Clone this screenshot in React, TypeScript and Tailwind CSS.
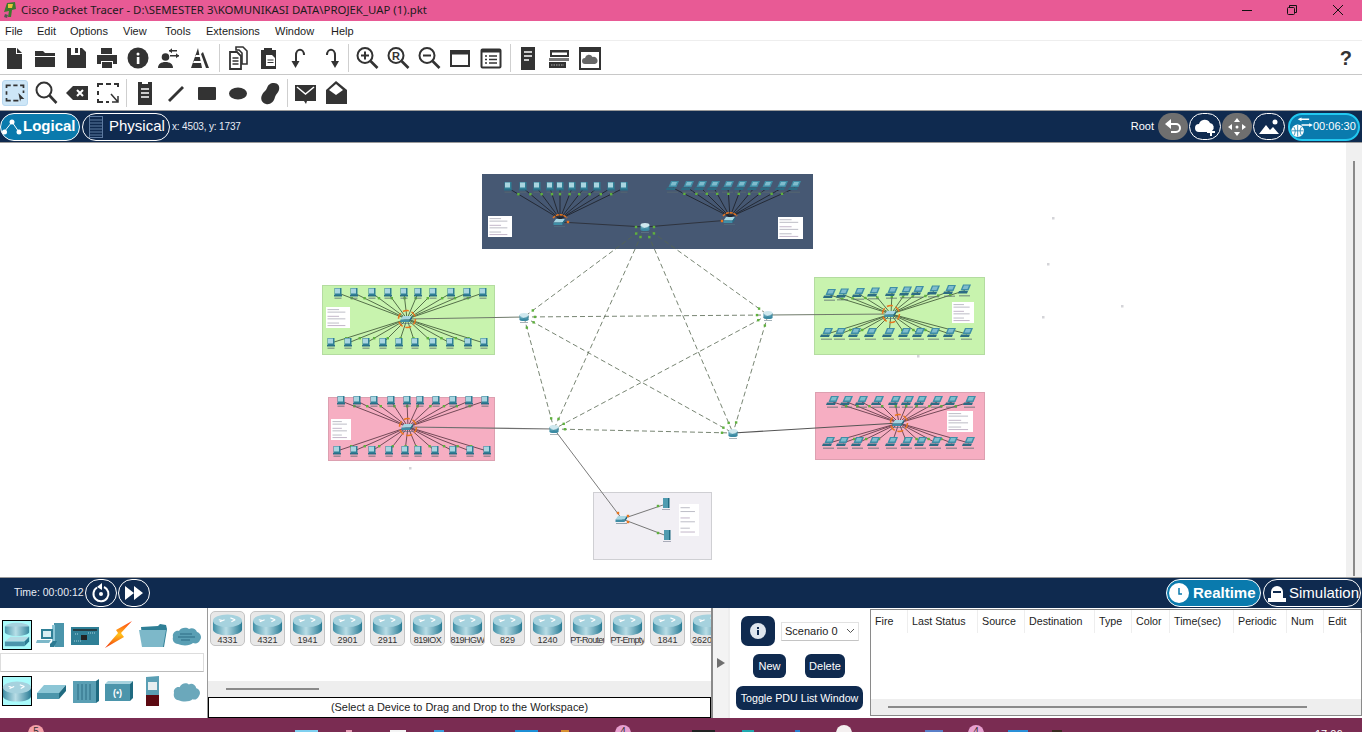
import React from "react";

const ICON = "#333333";

type Pt = [number, number];

const Gradients = () => (
  <svg className="absolute h-0 w-0">
    <defs>
      <linearGradient id="teal" x1="0" x2="1" y1="0" y2="0">
        <stop offset="0" stopColor="#3f8fa6" />
        <stop offset="0.45" stopColor="#b9dde6" />
        <stop offset="1" stopColor="#2b7d96" />
      </linearGradient>
      <linearGradient id="bolt" x1="0" x2="0" y1="0" y2="1">
        <stop offset="0" stopColor="#ff3a12" />
        <stop offset="0.5" stopColor="#ffc21a" />
        <stop offset="1" stopColor="#f2330c" />
      </linearGradient>
    </defs>
  </svg>
);

// ---- toolbar icons ----
const T = ({ children }: { children: React.ReactNode }) => (
  <svg width="28" height="28" viewBox="0 0 28 28" fill={ICON} stroke="none" className="block">
    {children}
  </svg>
);

const Mag = ({ children }: { children?: React.ReactNode }) => (
  <T>
    <circle cx="12" cy="11.5" r="7.5" fill="none" stroke={ICON} strokeWidth="2" />
    <path d="M17.5 17l7 7" stroke={ICON} strokeWidth="2.6" />
    {children}
  </T>
);

const topIcons: Record<string, React.ReactNode> = {
  newFile: <T><path d="M7 4h9v6h6v15H7z" /><path d="M17 4l5 5h-5z" /></T>,
  open: <T><path d="M4 7h8l2 2h10v3H4z" /><path d="M4 13h20v10H4z" /></T>,
  save: <T><path d="M5 4h4v7h9V4h2l4 4v16H5z" /><path d="M13 4h3v5h-3z" /></T>,
  print: <T><path d="M8 4h11v6H8z" /><path d="M4 11h20v9h-4v-3H8v3H4z" /><path d="M9 18h10v6H9z" /></T>,
  info: <T><circle cx="14" cy="14" r="10.5" /><rect x="12.8" y="13" width="2.6" height="7" fill="#fff" /><circle cx="14" cy="10" r="1.5" fill="#fff" /></T>,
  user: <T><circle cx="10.5" cy="13" r="3.8" /><path d="M3 24c0-4 3-6 7.500-6s7.500 2 7.500 6z" /><path d="M14 6h8v1.500h-8zM15 11h9v1.500h-9z" /><path d="M14 6.700l3-2.500v5zM24 11.700l-3-2.500v5z" /></T>,
  cone: <T><path d="M12 4l-7 20h11z" /><path d="M15 10l5 14h3l-6-16z" /><path d="M10 11l4 0v2l-5 0zM8 17l7 0v2l-8 0z" fill="#fff" /></T>,
  copy: <T><path d="M12 3h7l4 4v13h-5V9l-3-3h-3z" fill="none" stroke={ICON} strokeWidth="1.600" /><path d="M6 8h7l4 4v13H6z" fill="#fff" stroke={ICON} strokeWidth="1.800" /><path d="M8.500 14h6M8.500 17h6M8.500 20h6" stroke={ICON} strokeWidth="1.500" /></T>,
  paste: <T><path d="M6 6h3V4h8v2h4v19H6z" /><path d="M11 11h6l3 3v8h-9z" fill="#fff" /><path d="M12.500 16h6M12.500 18.500h6" stroke={ICON} strokeWidth="1.200" /></T>,
  undo: <T><path d="M17 11c0-7-8-7-8 0v8" fill="none" stroke={ICON} strokeWidth="2" transform="translate(1 0)" /><path d="M5.500 17h8l-4 7z" /></T>,
  redo: <T><path d="M10 11c0-7 8-7 8 0v8" fill="none" stroke={ICON} strokeWidth="2" /><path d="M14 17h8l-4 7z" /></T>,
  zoomIn: <Mag><path d="M8 11.500h8M12 7.500v8" stroke={ICON} strokeWidth="2" /></Mag>,
  zoomReset: <Mag><text x="12" y="15.500" fontSize="11" fontWeight="700" textAnchor="middle" fontFamily="Liberation Sans" fill={ICON}>R</text></Mag>,
  zoomOut: <Mag><path d="M8 11.500h8" stroke={ICON} strokeWidth="2" /></Mag>,
  win: <T><rect x="5" y="7" width="18" height="15" fill="none" stroke={ICON} strokeWidth="2" /><rect x="5" y="7" width="18" height="3.500" /></T>,
  list: <T><rect x="4.500" y="5.500" width="19" height="18" rx="1" fill="none" stroke={ICON} strokeWidth="2" /><rect x="5" y="5.500" width="18" height="3" /><path d="M8 12h2M12 12h8M8 15.500h2M12 15.500h8M8 19h2M12 19h8" stroke={ICON} strokeWidth="1.500" /></T>,
  server: <T><path d="M7 3h14v23H7z" /><path d="M10 8h8M10 12h8M10 16h5" stroke="#fff" strokeWidth="1.400" /></T>,
  rack: <T><path d="M5 6h19v7H5z" /><path d="M7 8.500h15v2.500H7z" fill="#fff" /><path d="M4 14h20v3H4z" fill="#777" /><path d="M4 18h17v6H4z" /><path d="M6 21h13" stroke="#888" strokeWidth="1.500" strokeDasharray="1.500 1" /></T>,
  cloudBox: <T><rect x="4" y="4" width="20" height="21" fill="none" stroke={ICON} strokeWidth="2" /><rect x="4" y="4" width="20" height="4" /><path d="M9 20a3 3 0 010-6 4 4 0 017.500-1 3.500 3.500 0 012.500 7z" fill="#666" /></T>,
};

const bottomIcons: Record<string, React.ReactNode> = {
  select: <T><path d="M4 8V5h5M12 5h5M20 5h4v3M4 12v4M24 11v3M4 20v3h5M12 23h6" fill="none" stroke={ICON} strokeWidth="2" /><path d="M19 17l7 7h-4l-1 3z" fill={ICON} transform="translate(-1 -3)" /></T>,
  magnifier: <T><circle cx="12" cy="11" r="7.500" fill="none" stroke={ICON} strokeWidth="2" /><path d="M17.500 16.500l7 7.500" stroke={ICON} strokeWidth="2.600" /></T>,
  del: <T><path d="M10 7h15v14H10l-7-7z" /><path d="M14 11l6 6M20 11l-6 6" stroke="#fff" strokeWidth="2" /></T>,
  resize: <T><path d="M4 8V5h5M12 5h5M20 5h4v3M4 12v4M4 20v3h5M12 23h3" fill="none" stroke={ICON} strokeWidth="2" /><path d="M17 15l7 8M24 17v6h-6" fill="none" stroke={ICON} strokeWidth="1.500" /></T>,
  note: <T><path d="M7 3h14v23H7z" /><path d="M11 3h6v2h-6z" fill="#fff" /><path d="M10 10h8M10 14h8M10 18h8" stroke="#fff" strokeWidth="1.400" /></T>,
  line: <T><path d="M7 22L21 8" stroke={ICON} strokeWidth="2.800" /></T>,
  rect: <T><rect x="5" y="8" width="18" height="13" rx="1" /></T>,
  ellipse: <T><ellipse cx="14" cy="14.500" rx="9" ry="6" /></T>,
  free: <T><path d="M19 4c4 0 6 3 5 7-1 3-3 4-4 7-1 5-5 8-9 7-4-1-6-5-4-9 1-3 4-4 5-7 1-3 3-5 7-5z" /></T>,
  mail: <T><path d="M4 6h21v16H16l-1 3-2-3H4z" /><path d="M6 8l8.500 7L23 8" fill="none" stroke="#fff" strokeWidth="1.500" /></T>,
  mailOpen: <T><path d="M14 2l11 9v14H4V11z" /><path d="M14 5l7 6-7 5-7-5z" fill="#fff" /></T>,
};

const Tool = ({ children }: { children: React.ReactNode }) => (
  <div className="mr-[3px] h-[28px] w-[28px] shrink-0">{children}</div>
);

const Sep = ({ className }: { className: string }) => (
  <div className={`h-[28px] w-px shrink-0 bg-[#cfcfcf] ${className}`} />
);

// ---- network diagram ----
const Pc = ({ x, y }: { x: number; y: number }) => (
  <g>
    <rect x={x - 3.500} y={y - 5} width="7" height="7" fill="#2f7f96" />
    <rect x={x - 3} y={y - 4.500} width="5" height="5" fill="#a9d5e0" />
    <path d={`M${x - 4} ${y + 2}h8v1.500h-8z`} fill="#2a6f87" />
    <rect x={x - 3.500} y={y + 4.500} width="7" height="1.500" fill="#5a6a70" opacity="0.55" />
  </g>
);

const Laptop = ({ x, y }: { x: number; y: number }) => (
  <g>
    <path d={`M${x - 2} ${y - 6}h8l-2.500 6h-8z`} fill="#3f8ea6" />
    <path d={`M${x - 1} ${y - 5}h5l-1.500 3.500h-5z`} fill="#7fbccd" />
    <path d={`M${x - 6} ${y + 0.500}h9l-1 2.500h-9z`} fill="#2c6c84" />
    <rect x={x - 6} y={y + 4.500} width="11" height="1.500" fill="#5a6a70" opacity="0.55" />
  </g>
);

const SwitchNode = ({ x, y }: { x: number; y: number }) => (
  <g>
    <path d={`M${x - 4} ${y - 3}h9l-2.500 3.500h-9z`} fill="#a8d6e2" />
    <path d={`M${x - 6.500} ${y + 0.500}h9v2.500h-9z`} fill="#3f8ea6" />
    <path d={`M${x + 2.500} ${y + 0.500}l2.500-3.500v2.500l-2.500 3.500z`} fill="#236c84" />
    <rect x={x - 6} y={y + 4} width="11" height="1" fill="#55707e" opacity="0.6" />
  </g>
);

const RouterNode = ({ x, y }: { x: number; y: number }) => (
  <g>
    <rect x={x - 4.500} y={y - 2} width="9" height="4.500" fill="url(#teal)" />
    <ellipse cx={x} cy={y + 2.500} rx="4.500" ry="1.500" fill="#3c8ba3" />
    <ellipse cx={x} cy={y - 2} rx="4.500" ry="2" fill="#cfe8ee" />
    <rect x={x - 4} y={y + 5} width="8" height="1" fill="#6b7f88" opacity="0.6" />
  </g>
);

const Dot = ({ x, y, c = "#5fb13e" }: { x: number; y: number; c?: string }) => (
  <rect x={x - 1.200} y={y - 1.200} width="2.400" height="2.400" fill={c} />
);

// link with a green light close to the end device
const Link = ({ a, b, color, w = 0.8 }: { a: Pt; b: Pt; color: string; w?: number }) => (
  <g>
    <line x1={a[0]} y1={a[1]} x2={b[0]} y2={b[1]} stroke={color} strokeWidth={w} />
    <Dot x={a[0] + (b[0] - a[0]) * 0.2} y={a[1] + (b[1] - a[1]) * 0.2} />
  </g>
);

const Note = ({ x, y, w, h }: { x: number; y: number; w: number; h: number }) => (
  <g>
    <rect x={x} y={y} width={w} height={h} fill="#fff" />
    {[0.1, 0.22, 0.42, 0.54, 0.74, 0.86].map((f, i) => (
      <rect
        key={i}
        x={x + 1.500}
        y={y + h * f}
        width={(w - 3) * (i % 2 ? 0.85 : 0.55)}
        height="1"
        fill={i % 3 === 2 ? "#8a6f96" : "#7d7d90"}
        opacity="0.5"
      />
    ))}
  </g>
);

const Arcs = ({ x, y }: { x: number; y: number }) => (
  <circle
    cx={x}
    cy={y}
    r="8.500"
    fill="none"
    stroke="#e8761f"
    strokeWidth="1.500"
    strokeDasharray="6 2.900"
  />
);

const R_A: Pt = [645, 227];
const R_B: Pt = [524, 317];
const R_C: Pt = [768, 315];
const R_D: Pt = [554, 429];
const R_E: Pt = [733, 433];
const mesh: [Pt, Pt][] = [
  [R_A, R_B],
  [R_A, R_C],
  [R_A, R_D],
  [R_A, R_E],
  [R_B, R_C],
  [R_B, R_D],
  [R_B, R_E],
  [R_C, R_D],
  [R_C, R_E],
  [R_D, R_E],
];

const lans = [
  {
    sw: [407, 319] as Pt,
    kind: "pc",
    line: "#55704a",
    top: [338, 354, 372, 388, 404, 418, 433, 451, 467, 483].map((x): Pt => [x, 293]),
    bottom: [331, 348, 366, 383, 399, 415, 433, 450, 468, 484].map((x): Pt => [x, 343]),
  },
  {
    sw: [891, 314] as Pt,
    kind: "laptop",
    line: "#55704a",
    top: [830, 843, 859, 874, 892, 906, 918, 934, 950, 965].map((x, i): Pt => [x, 295 - i * 0.5]),
    bottom: [827, 840, 855, 871, 889, 905, 919, 934, 950, 967].map((x): Pt => [x, 334]),
  },
  {
    sw: [408, 427] as Pt,
    kind: "pc",
    line: "#744a58",
    top: [341, 357, 374, 391, 407, 420, 436, 453, 469, 485].map((x): Pt => [x, 401]),
    bottom: [337, 354, 372, 389, 405, 418, 435, 453, 470, 487].map((x): Pt => [x, 451]),
  },
  {
    sw: [899, 423] as Pt,
    kind: "laptop",
    line: "#744a58",
    top: [833, 847, 862, 878, 895, 908, 921, 937, 952, 970].map((x): Pt => [x, 402]),
    bottom: [829, 843, 858, 874, 892, 907, 921, 936, 952, 969].map((x): Pt => [x, 443]),
  },
];

const bluePcs = [508, 523, 537, 550, 560, 572, 584, 597, 611, 624];
const blueLaptops = [673, 688, 701, 714, 728, 741, 754, 767, 782, 795];
const specks: Pt[] = [[1053, 218], [1048, 264], [1043, 317], [1122, 306], [918, 356], [410, 468]];

const towards = (a: Pt, b: Pt, d: number): Pt => {
  const len = Math.hypot(b[0] - a[0], b[1] - a[1]);
  return [a[0] + ((b[0] - a[0]) * d) / len, a[1] + ((b[1] - a[1]) * d) / len];
};

const Diagram = () => (
  <svg width="1346" height="434" viewBox="0 143 1346 434" className="block">
    <rect x="482" y="174" width="331" height="75" fill="#465873" />
    <rect x="322.500" y="285.500" width="172" height="69" fill="#c8f3ae" stroke="#b4dca0" />
    <rect x="814.500" y="277.500" width="170" height="77" fill="#c8f3ae" stroke="#b4dca0" />
    <rect x="328.500" y="397.500" width="166" height="63" fill="#f6aec2" stroke="#dca0b0" />
    <rect x="815.500" y="392.500" width="169" height="67" fill="#f6aec2" stroke="#dca0b0" />
    <rect x="593.500" y="492.500" width="118" height="67" fill="#f1eff4" stroke="#cfcfd3" />

    {specks.map(([x, y]) => (
      <rect key={x} x={x - 1} y={y - 1} width="2.500" height="2.500" fill="#d4d4d8" />
    ))}

    {mesh.map(([a, b], i) => {
      const p = towards(a, b, 11);
      const q = towards(b, a, 11);
      return (
        <g key={i}>
          <line x1={a[0]} y1={a[1]} x2={b[0]} y2={b[1]} stroke="#56664f" strokeWidth="0.800" strokeDasharray="5 3" />
          <Dot x={p[0]} y={p[1]} />
          <Dot x={q[0]} y={q[1]} />
        </g>
      );
    })}

    {/* top block */}
    <line x1="560" y1="222" x2="645" y2="227" stroke="#2b2f38" strokeWidth="0.900" />
    <line x1="730" y1="220" x2="645" y2="227" stroke="#2b2f38" strokeWidth="0.900" />
    <Dot x={568} y={222} c="#e8761f" />
    <Dot x={722} y={221} c="#e8761f" />
    <Dot x={636} y={227} />
    <Dot x={654} y={227} />
    {bluePcs.map((x) => (
      <Link key={x} a={[x, 188]} b={[560, 219]} color="#20252e" w={0.9} />
    ))}
    {blueLaptops.map((x) => (
      <Link key={x} a={[x, 188]} b={[730, 217]} color="#20252e" w={0.9} />
    ))}
    <path d="M553 218a9 9 0 0114 0" fill="none" stroke="#e8761f" strokeWidth="1.500" strokeDasharray="3 0.800" />
    <path d="M723 216a9 9 0 0114 0" fill="none" stroke="#e8761f" strokeWidth="1.500" strokeDasharray="3 0.800" />
    {bluePcs.map((x) => <Pc key={x} x={x} y={187} />)}
    {blueLaptops.map((x) => <Laptop key={x} x={x} y={187} />)}
    <SwitchNode x={560} y={222} />
    <SwitchNode x={730} y={220} />
    <Note x={488} y={216} w={24} h={21} />
    <Note x={778} y={217} w={25} h={22} />

    {/* lan to router trunks */}
    <line x1="407" y1="319" x2="524" y2="317" stroke="#6f7a6a" strokeWidth="1.200" />
    <line x1="891" y1="314" x2="768" y2="315" stroke="#6f7a6a" strokeWidth="1.200" />
    <line x1="408" y1="427" x2="554" y2="429" stroke="#6f6f6f" strokeWidth="1.200" />
    <line x1="899" y1="423" x2="733" y2="433" stroke="#555" strokeWidth="1.200" />
    <line x1="554" y1="429" x2="622" y2="519" stroke="#7a7a7a" strokeWidth="1" />

    {lans.map((lan, i) => (
      <g key={i}>
        {[...lan.top, ...lan.bottom].map((p, j) => (
          <Link key={j} a={p} b={lan.sw} color={lan.line} w={1} />
        ))}
        {[...lan.top, ...lan.bottom].map((p, j) =>
          lan.kind === "pc" ? <Pc key={j} x={p[0]} y={p[1]} /> : <Laptop key={j} x={p[0]} y={p[1]} />
        )}
        <Arcs x={lan.sw[0]} y={lan.sw[1]} />
        <SwitchNode x={lan.sw[0]} y={lan.sw[1]} />
      </g>
    ))}
    <Note x={326} y={307} w={24} h={21} />
    <Note x={952} y={302} w={22} h={21} />
    <Note x={331} y={419} w={20} h={21} />
    <Note x={947} y={411} w={26} h={21} />

    {/* server block */}
    <line x1="622" y1="519" x2="666" y2="504" stroke="#777" strokeWidth="1" />
    <line x1="622" y1="519" x2="667" y2="536" stroke="#777" strokeWidth="1" />
    <Dot x={628} y={516} c="#e8761f" />
    <Dot x={628} y={522} c="#e8761f" />
    <Dot x={658} y={506} />
    <Dot x={658} y={533} />
    <Dot x={618} y={513} c="#e8761f" />
    <SwitchNode x={622} y={519} />
    {([[666, 504], [667, 536]] as Pt[]).map(([x, y]) => (
      <g key={y}>
        <rect x={x - 3} y={y - 6} width="5" height="10" fill="#4f9bb0" />
        <rect x={x + 2} y={y - 6} width="1.500" height="10" fill="#1f6a80" />
        <rect x={x - 4} y={y + 5} width="8" height="1" fill="#7a7d90" opacity="0.6" />
      </g>
    ))}
    <Note x={679} y={504} w={20} h={32} />

    <RouterNode x={R_A[0]} y={R_A[1]} />
    <RouterNode x={R_B[0]} y={R_B[1]} />
    <RouterNode x={R_C[0]} y={R_C[1]} />
    <RouterNode x={R_D[0]} y={R_D[1]} />
    <RouterNode x={R_E[0]} y={R_E[1]} />
  </svg>
);

// ---- bottom device icons ----
const RouterBig = ({ size = 30 }: { size?: number }) => (
  <svg width={size} height={size * 0.75} viewBox="0 0 32 24" className="block shrink-0">
    <path d="M1 8v9c0 3.500 6.500 6 15 6s15-2.500 15-6V8z" fill="url(#teal)" />
    <ellipse cx="16" cy="8" rx="15" ry="6.500" fill="#a6d2de" />
    <path d="M8 9l5-2M7 7l3 .5M19 5l5 2M20 9l4-2" stroke="#fff" strokeWidth="1.200" fill="none" />
  </svg>
);

const categories: React.ReactNode[] = [
  <svg key="a" width="30" height="28" viewBox="0 0 30 28" className="block">
    <ellipse cx="15" cy="5" rx="13" ry="4" fill="#a6d2de" />
    <path d="M2 5v6c0 2 6 4 13 4s13-2 13-4V5z" fill="url(#teal)" opacity="0.9" />
    <path d="M8 16h20l-5 5H2z" fill="#b5dbe4" />
    <path d="M2 21h21v5H2z" fill="#4b95ab" />
    <path d="M23 21l5-5v5l-5 5z" fill="#2c7a92" />
  </svg>,
  <svg key="b" width="30" height="28" viewBox="0 0 30 28" className="block">
    <path d="M18 2h10v24H18z" fill="#4b95ab" />
    <path d="M16 4h3v22h-3z" fill="#8cc6d6" />
    <path d="M5 8h12v10H5z" fill="#2f7f96" />
    <path d="M7 10h8v6H7z" fill="#d8eef3" />
    <path d="M1 19h14l-2 3H0z" fill="#7db8c9" />
    <path d="M14 23l3-3h4l-3 6h-4z" fill="#2c7a92" />
  </svg>,
  <svg key="c" width="30" height="28" viewBox="0 0 30 28" className="block">
    <rect x="1" y="6" width="28" height="18" fill="#2f7f96" />
    <path d="M3 8h24v2H3z" fill="#222" opacity="0.7" />
    <rect x="11" y="14" width="6" height="5" fill="#222" />
    <path d="M4 20h8M18 12h8M5 13h4" stroke="#a6d2de" strokeWidth="1" strokeDasharray="1 1" />
  </svg>,
  <svg key="d" width="30" height="28" viewBox="0 0 30 28" className="block">
    <path d="M28 0L12 9l2 3-13 15 19-11-3-4z" fill="url(#bolt)" />
  </svg>,
  <svg key="e" width="30" height="28" viewBox="0 0 30 28" className="block">
    <path d="M3 6l17-1 2-2 6 1 1 4-3 18H5z" fill="#2f7f96" />
    <path d="M1 9h27l-3 17H4z" fill="#7db8c9" />
  </svg>,
  <svg key="f" width="30" height="28" viewBox="0 0 30 28" className="block">
    <path d="M6 23c-4 0-6-4-5-7-1-4 3-7 6-6 2-4 8-4 10-2 3-2 7 0 8 3 4 1 5 6 3 8-1 3-4 4-7 3-3 3-11 3-15 1z" fill="#5a9fb4" />
    <path d="M8 13h12M6 16h17M9 19h9" stroke="#2c6c84" strokeWidth="1.200" />
  </svg>,
];

const subCategories: React.ReactNode[] = [
  <RouterBig key="a" />,
  <svg key="b" width="30" height="24" viewBox="0 0 30 24" className="block">
    <path d="M8 6h22l-7 8H1z" fill="#8cc6d6" />
    <path d="M1 14h22v6H1z" fill="#4b95ab" />
    <path d="M23 14l7-8v6l-7 8z" fill="#1f6a80" />
  </svg>,
  <svg key="c" width="30" height="30" viewBox="0 0 30 30" className="block">
    <path d="M3 5h23v22H3z" fill="#5a9fb4" />
    <path d="M26 5l3-2v22l-3 2z" fill="#1f6a80" />
    <path d="M8 8v16M12 8v16M16 8v16M20 8v16" stroke="#2c6c84" strokeWidth="1" />
  </svg>,
  <svg key="d" width="30" height="26" viewBox="0 0 30 26" className="block">
    <path d="M1 6h25v17H1z" fill="#4b95ab" />
    <path d="M1 6l3-3h25l-3 3z" fill="#a6d2de" />
    <path d="M26 6l3-3v17l-3 3z" fill="#1f6a80" />
    <text x="13.500" y="18" fontSize="9" fill="#fff" textAnchor="middle" fontFamily="Liberation Sans" fontWeight="700">(•)</text>
  </svg>,
  <svg key="e" width="16" height="32" viewBox="0 0 16 32" className="block">
    <path d="M1 2l13-1v30H1z" fill="#5a9fb4" />
    <path d="M1 20h13v11H1z" fill="#5c0a12" />
    <rect x="3" y="7" width="9" height="8" fill="#e6eef0" />
  </svg>,
  <svg key="f" width="30" height="26" viewBox="0 0 30 28" className="block">
    <path d="M6 24c-4 0-6-4-5-8-1-4 3-7 6-6 2-5 8-5 10-3 3-2 7 0 8 4 4 1 5 6 3 8-1 3-4 5-7 4-3 3-11 3-15 1z" fill="#6ba8bb" />
  </svg>,
];

const devices = ["4331", "4321", "1941", "2901", "2911", "819IOX", "819HGW", "829", "1240", "PT-Router", "PT-Empty", "1841", "2620"];

const pduCols: [string, number][] = [
  ["Fire", 37],
  ["Last Status", 70],
  ["Source", 47],
  ["Destination", 70],
  ["Type", 37],
  ["Color", 38],
  ["Time(sec)", 64],
  ["Periodic", 53],
  ["Num", 37],
  ["Edit", 37],
];

const taskBits: [number, number, string][] = [
  [295, 23, "bg-[#7fd0f0]"],
  [346, 6, "bg-[#e8a0b8]"],
  [390, 16, "bg-[#f4f4f4]"],
  [434, 10, "bg-[#3aa0e0]"],
  [515, 23, "bg-[#1c8fd6]"],
  [561, 8, "bg-[#d89030]"],
  [692, 23, "bg-[#222222]"],
  [742, 12, "bg-[#20a8b0]"],
  [795, 5, "bg-[#2a80d0]"],
  [925, 18, "bg-[#5a7fc8]"],
  [1008, 20, "bg-[#2a90d8]"],
  [1052, 10, "bg-[#3a2a20]"],
];

const Badge = ({ left, color, label }: { left: number; color: string; label?: string }) => (
  <div
    className={`absolute top-[7px] flex h-[16px] w-[16px] justify-center rounded-full text-[10px] leading-[14px] text-[#333333] ${color}`}
    style={{ left }}
  >
    {label}
  </div>
);

export default function App() {
  return (
    <div className="relative flex h-[732px] w-[1362px] flex-col overflow-hidden bg-white font-['Liberation_Sans',sans-serif] text-black">
      <Gradients />

      {/* title bar */}
      <div className="flex h-[21px] shrink-0 items-center bg-[#e85a95] pb-[2px]">
        <svg width="16" height="18" viewBox="0 0 16 18" className="ml-[2px] shrink-0">
          <path d="M5 2l8-1 1 7-4 1-1 7H6l1-6-5 1z" fill="#3c7a2c" />
          <path d="M6 3l5 0-1 4H6z" fill="#e8c23a" />
          <path d="M3 13l3 1-1 3-3-1z" fill="#555" />
        </svg>
        <span className="ml-[3px] font-['Noto_Sans',sans-serif] text-[11.4px] text-[#1c1c1c]">
          Cisco Packet Tracer - D:\SEMESTER 3\KOMUNIKASI DATA\PROJEK_UAP (1).pkt
        </span>
        <div className="ml-auto flex items-center">
          <svg width="12" height="12" viewBox="0 0 12 12" className="mr-[33px]">
            <path d="M1 6.500h10" stroke="#111" strokeWidth="1" />
          </svg>
          <svg width="12" height="12" viewBox="0 0 12 12" className="mr-[34px]">
            <rect x="1.500" y="3.500" width="7" height="7" rx="1" fill="none" stroke="#111" />
            <path d="M3.500 3V1.500h7v7H9" fill="none" stroke="#111" />
          </svg>
          <svg width="12" height="12" viewBox="0 0 12 12" className="mr-[18px]">
            <path d="M1 1l10 10M11 1L1 11" stroke="#111" strokeWidth="1" />
          </svg>
        </div>
      </div>

      {/* menu */}
      <div className="grid h-[20px] shrink-0 grid-cols-[32px_33px_53px_42px_41px_69px_56px_auto] items-center border-b border-[#eeeeee] pl-[5px] pt-px text-[11px] text-[#1c1c1c]">
        {["File", "Edit", "Options", "View", "Tools", "Extensions", "Window", "Help"].map((m) => (
          <span key={m}>{m}</span>
        ))}
      </div>

      {/* main toolbar */}
      <div className="flex h-[34px] shrink-0 items-center border-b border-[#c8c8c8]">
        {["newFile", "open", "save", "print", "info", "user", "cone"].map((k) => (
          <Tool key={k}>{topIcons[k]}</Tool>
        ))}
        <Sep className="ml-[2px] mr-[4px]" />
        {["copy", "paste", "undo", "redo"].map((k) => (
          <Tool key={k}>{topIcons[k]}</Tool>
        ))}
        <Sep className="mr-[4px]" />
        {["zoomIn", "zoomReset", "zoomOut", "win", "list"].map((k) => (
          <Tool key={k}>{topIcons[k]}</Tool>
        ))}
        <Sep className="ml-[2px] mr-[3px]" />
        {["server", "rack", "cloudBox"].map((k) => (
          <Tool key={k}>{topIcons[k]}</Tool>
        ))}
        <span className="ml-auto mr-[10px] text-[20px] font-bold text-[#333333]">?</span>
      </div>

      {/* second toolbar */}
      <div className="flex h-[35px] shrink-0 items-center">
        <div className="ml-[2px] mr-[1px] flex h-[26px] w-[26px] items-center justify-center rounded-[3px] border border-[#b8d8f0] bg-[#cde6f7]">
          <div className="scale-[0.85]">{bottomIcons.select}</div>
        </div>
        <div className="w-[3px]" />
        {["magnifier", "del", "resize"].map((k) => (
          <Tool key={k}>{bottomIcons[k]}</Tool>
        ))}
        <Sep className="ml-[1px] mr-[4px]" />
        {["note", "line", "rect", "ellipse", "free"].map((k) => (
          <Tool key={k}>{bottomIcons[k]}</Tool>
        ))}
        <Sep className="ml-[1px] mr-[3px]" />
        {["mail", "mailOpen"].map((k) => (
          <Tool key={k}>{bottomIcons[k]}</Tool>
        ))}
      </div>

      {/* logical nav bar */}
      <div className="flex h-[33px] shrink-0 items-center border-y border-[#9a9a9a] bg-[#0f2a4f]">
        <div className="flex h-[28px] w-[80px] items-center rounded-full border border-white bg-[#0a7aad]">
          <svg width="22" height="22" viewBox="0 0 22 22" className="shrink-0">
            <path d="M3 16l8-10 7 10" fill="none" stroke="#fff" strokeWidth="1" />
            <circle cx="3.500" cy="16" r="2.500" fill="#fff" />
            <circle cx="11" cy="6" r="2.500" fill="#fff" />
            <circle cx="18" cy="16" r="2.500" fill="#fff" />
          </svg>
          <span className="text-[15px] font-bold text-white">Logical</span>
        </div>
        <div className="ml-[2px] flex h-[28px] w-[88px] items-center rounded-full border border-white">
          <svg width="16" height="24" viewBox="0 0 16 24" className="ml-[5px] shrink-0">
            <rect x="1.500" y="1.500" width="13" height="21" fill="none" stroke="#5d7aa0" />
            <path d="M2 5h12M2 8h12M2 11h12M2 14h12M2 17h12M2 20h12" stroke="#5d7aa0" />
          </svg>
          <span className="ml-[5px] text-[15px] text-white">Physical</span>
        </div>
        <span className="ml-[2px] text-[10px] tracking-[-0.15px] text-[#e8edf5]">x: 4503, y: 1737</span>

        <span className="ml-auto text-[11px] text-white">Root</span>
        <div className="ml-[4px] flex h-[27px] w-[30px] items-center justify-center rounded-full bg-[#6f6f6f]">
          <svg width="20" height="18" viewBox="0 0 20 18">
            <path d="M4 6h9a4 4 0 010 8H8" fill="none" stroke="#fff" strokeWidth="2" />
            <path d="M8 1L2 6l6 5z" fill="#fff" />
          </svg>
        </div>
        <div className="ml-[1px] flex h-[27px] w-[32px] items-center justify-center rounded-full border border-white">
          <svg width="22" height="20" viewBox="0 0 22 20">
            <path d="M5 15a4 4 0 010-8 6 6 0 0111-1 4.500 4.500 0 012 8l-3 1z" fill="#fff" />
            <path d="M17 11v8M13 15h8" stroke="#fff" strokeWidth="2" />
          </svg>
        </div>
        <div className="ml-[1px] flex h-[27px] w-[30px] items-center justify-center rounded-full bg-[#6f6f6f]">
          <svg width="20" height="20" viewBox="0 0 20 20" fill="#fff">
            <path d="M10 1l3 4H7zM10 19l-3-4h6zM1 10l4-3v6zM19 10l-4 3V7z" />
            <circle cx="10" cy="10" r="1.500" />
          </svg>
        </div>
        <div className="ml-[1px] flex h-[27px] w-[32px] items-center justify-center rounded-full border border-white">
          <svg width="22" height="18" viewBox="0 0 22 18" fill="#fff">
            <path d="M1 16l7-9 4 5 3-3 6 7z" />
            <circle cx="17" cy="4" r="2.500" />
          </svg>
        </div>
        <div className="ml-[3px] mr-[2px] flex h-[28px] w-[72px] items-center rounded-full border-2 border-[#22c8f0] bg-[#0a7aad]">
          <svg width="23" height="24" viewBox="0 0 24 24" className="shrink-0">
            <circle cx="8" cy="16" r="6.500" fill="#fff" />
            <path d="M2 16h12M8 10v12M4 12c2 3 2 5 0 9M12 12c-2 3-2 5 0 9" stroke="#0a7aad" strokeWidth="0.800" fill="none" />
            <path d="M10 4h10M12 10h10" stroke="#fff" strokeWidth="1.500" />
            <path d="M12 2l-4 2 4 2zM20 8l4 2-4 2z" fill="#fff" />
          </svg>
          <span className="text-[11px] text-white">00:06:30</span>
        </div>
      </div>

      {/* workspace */}
      <div className="flex h-[434px] shrink-0">
        <Diagram />
        <div className="flex w-[16px] shrink-0 justify-center bg-[#f0f0f0] pt-[18px]">
          <div className="h-[415px] w-[2px] bg-[#8a8a8a]" />
        </div>
      </div>

      {/* time bar */}
      <div className="flex h-[31px] shrink-0 items-center border-t border-[#9a9a9a] bg-[#0f2a4f]">
        <span className="ml-[14px] w-[71px] text-[10.5px] text-[#e8edf5]">Time: 00:00:12</span>
        <div className="flex h-[28px] w-[32px] items-center justify-center rounded-full border border-white">
          <svg width="20" height="20" viewBox="0 0 20 20">
            <path d="M6 4.500a7.500 7.500 0 107-.500" fill="none" stroke="#fff" strokeWidth="2" />
            <path d="M11 0l-5 4 5 3z" fill="#fff" />
            <circle cx="10" cy="11" r="2" fill="#fff" />
          </svg>
        </div>
        <div className="ml-[1px] flex h-[28px] w-[32px] items-center justify-center rounded-full border border-white">
          <svg width="20" height="14" viewBox="0 0 20 14" fill="#fff">
            <path d="M1 0l9 7-9 7zM10 0l9 7-9 7z" />
          </svg>
        </div>
        <div className="ml-auto flex h-[28px] w-[95px] items-center rounded-full border border-white bg-[#0a7aad]">
          <svg width="22" height="22" viewBox="0 0 22 22" className="ml-[1px] shrink-0">
            <circle cx="11" cy="11" r="10" fill="#fff" />
            <path d="M11 6v6h3" fill="none" stroke="#0a7aad" strokeWidth="1.500" />
          </svg>
          <span className="ml-[3px] text-[15px] font-bold text-white">Realtime</span>
        </div>
        <div className="ml-[2px] mr-[1px] flex h-[28px] w-[98px] items-center rounded-full border border-white">
          <svg width="22" height="20" viewBox="0 0 22 20" className="ml-[2px] shrink-0" fill="#fff">
            <path d="M5 9a6 6 0 0112 0v6H5z" />
            <rect x="7" y="8" width="8" height="2" fill="#0f2a4f" />
            <path d="M2 15h18v4H2z" />
          </svg>
          <span className="ml-[1px] text-[15px] text-white">Simulation</span>
        </div>
      </div>

      {/* bottom panel */}
      <div className="flex h-[110px] shrink-0">
        <div className="flex w-[207px] shrink-0 flex-col">
          <div className="mt-[12px] flex h-[30px] items-center">
            {categories.map((c, i) => (
              <div
                key={i}
                className={`flex h-[30px] items-center justify-center ${
                  i === 0 ? "ml-[2px] mr-[4px] w-[30px] border border-black bg-[#a9fbfb]" : "mr-[4px] w-[30px]"
                }`}
              >
                {c}
              </div>
            ))}
          </div>
          <div className="mt-[3px] h-[19px] w-[204px] border border-[#dddddd] border-b-[#bbbbbb]" />
          <div className="mt-[4px] flex h-[30px] items-center">
            {subCategories.map((c, i) => (
              <div
                key={i}
                className={`flex h-[30px] items-center justify-center ${
                  i === 0 ? "ml-[2px] mr-[4px] w-[30px] border border-black bg-[#a9fbfb]" : "mr-[4px] w-[30px]"
                }`}
              >
                {c}
              </div>
            ))}
          </div>
        </div>

        <div className="flex w-[504px] shrink-0 flex-col border-l border-[#9a9a9a]">
          <div className="flex h-[73px] gap-[5px] overflow-hidden pl-[2px] pt-[3px]">
            {devices.map((d) => (
              <div
                key={d}
                className={`flex h-[35px] w-[35px] shrink-0 flex-col overflow-hidden rounded-[5px] border border-[#c4c4c4] bg-[#e8e8e8] pt-[1px] ${
                  d === "2620" ? "items-start pl-[1px]" : "items-center"
                }`}
              >
                <RouterBig size={31} />
                <span
                  className={`mt-[-1px] whitespace-nowrap leading-[11px] text-[#333333] ${
                    d.startsWith("PT")
                      ? "text-[9px] tracking-[-0.7px]"
                      : d.startsWith("819")
                        ? "text-[9px] tracking-[-0.5px]"
                        : "text-[9px]"
                  }`}
                >
                  {d}
                </span>
              </div>
            ))}
          </div>
          <div className="flex h-[16px] items-center bg-[#eeeeee] pl-[18px]">
            <div className="h-[2px] w-[93px] bg-[#8a8a8a]" />
          </div>
          <div className="flex h-[21px] items-center justify-center border border-black text-[10.9px] text-[#1c1c1c]">
            (Select a Device to Drag and Drop to the Workspace)
          </div>
        </div>

        <div className="flex w-[19px] shrink-0 items-center justify-center border-x-2 border-l-[#8a8a8a] border-r-[#eeeeee] bg-[#f3f3f3]">
          <div className="h-0 w-0 border-y-[5px] border-l-[8px] border-y-transparent border-l-[#6f6f6f]" />
        </div>

        {/* scenario */}
        <div className="flex w-[140px] shrink-0 flex-col pl-[6px]">
          <div className="mt-[8px] flex h-[30px] items-center pl-[5px]">
            <div className="flex h-[30px] w-[34px] items-center justify-center rounded-[7px] bg-[#0f2a4f]">
              <svg width="16" height="16" viewBox="0 0 16 16">
                <circle cx="8" cy="8" r="8" fill="#dfe6ee" />
                <rect x="7" y="7" width="2" height="5" fill="#0f2a4f" />
                <rect x="7" y="4" width="2" height="2" fill="#0f2a4f" />
              </svg>
            </div>
            <div className="ml-[6px] flex h-[19px] w-[78px] items-center justify-between border border-[#e2e2e2] border-b-[#c4c4c4] pl-[3px] pr-[3px] text-[11px] text-[#1c1c1c]">
              Scenario 0
              <svg width="9" height="6" viewBox="0 0 9 6">
                <path d="M1 1l3.500 3.500L8 1" fill="none" stroke="#555" />
              </svg>
            </div>
          </div>
          <div className="mt-[8px] flex h-[24px] items-center pl-[17px] text-[11px] text-white">
            <div className="flex h-[24px] w-[33px] items-center justify-center rounded-[6px] bg-[#0f2a4f]">New</div>
            <div className="ml-[19px] flex h-[24px] w-[40px] items-center justify-center rounded-[6px] bg-[#0f2a4f]">Delete</div>
          </div>
          <div className="mt-[8px] flex h-[24px] w-[127px] items-center justify-center rounded-[7px] bg-[#0f2a4f] text-[10.7px] text-white">
            Toggle PDU List Window
          </div>
        </div>

        {/* pdu table */}
        <div className="mt-px mb-[2px] flex min-w-0 flex-1 flex-col border border-[#8a8a8a]">
          <div className="flex h-[23px] shrink-0 text-[10.7px] text-[#1c1c1c]">
            {pduCols.map(([label, w]) => (
              <div key={label} className="flex items-center border-r border-[#eeeeee] pl-[4px]" style={{ width: w }}>
                {label}
              </div>
            ))}
          </div>
          <div className="flex-1" />
          <div className="flex h-[16px] shrink-0 items-center bg-[#eeeeee] pl-[17px]">
            <div className="h-[2px] w-[419px] bg-[#8a8a8a]" />
          </div>
        </div>
      </div>

      {/* taskbar, cut off by the window */}
      <div className="relative h-[14px] shrink-0 overflow-hidden bg-[#7a2c52]">
        {taskBits.map(([left, w, c]) => (
          <div key={left} className={`absolute top-[12px] h-[6px] ${c}`} style={{ left, width: w }} />
        ))}
        <Badge left={28} color="bg-[#f5a0a8]" label="5" />
        <Badge left={615} color="bg-[#e8a0d0]" label="4" />
        <Badge left={836} color="bg-[#f4f0f0]" />
        <Badge left={968} color="bg-[#e8a0d0]" label="4" />
        <span className="absolute left-[1315px] top-[9px] text-[11px] leading-[14px] text-white">17:06</span>
      </div>
    </div>
  );
}
